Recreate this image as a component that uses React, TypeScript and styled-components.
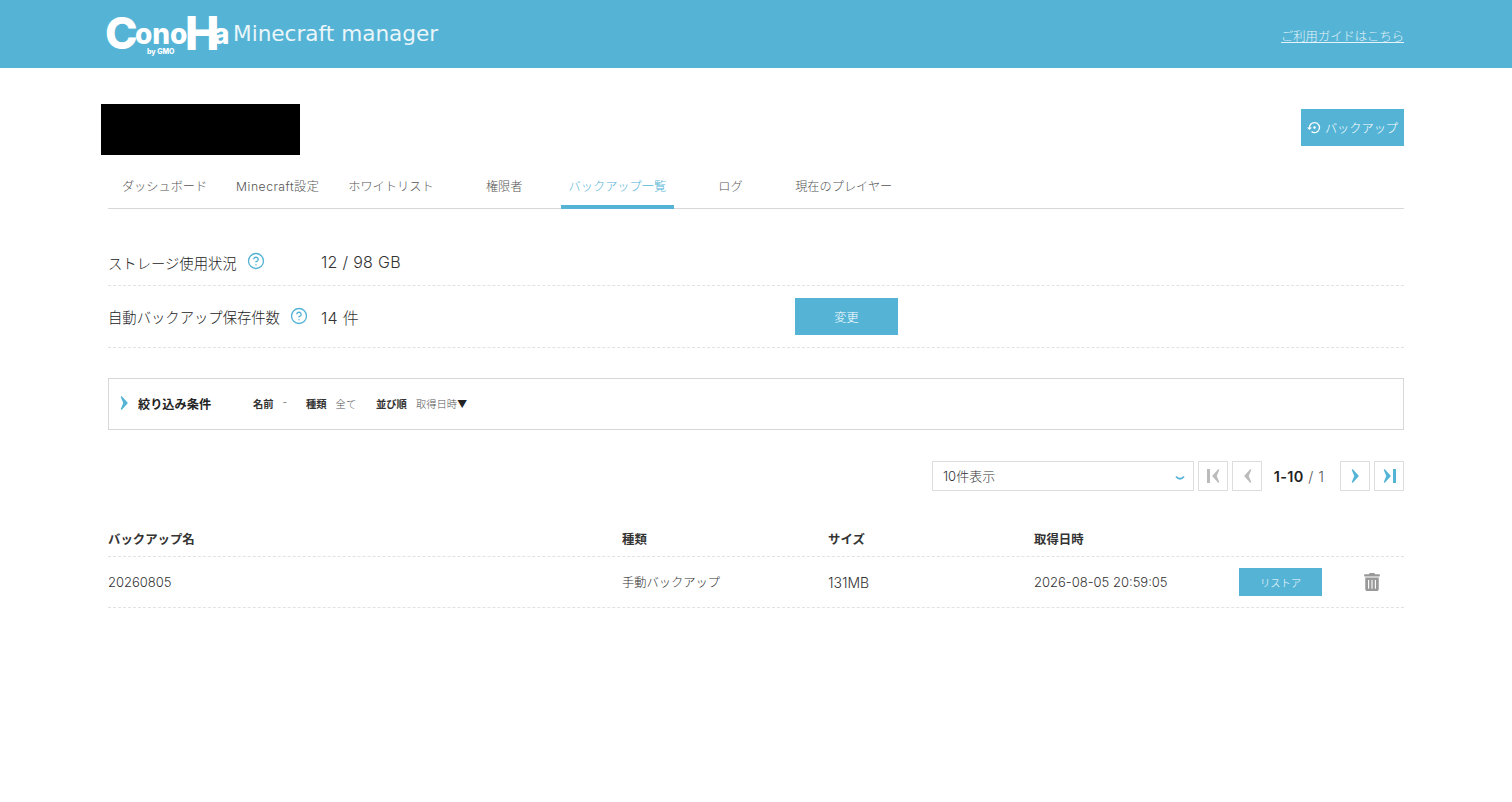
import React from "react"
import styled, { createGlobalStyle } from "styled-components"
import { CircleHelp } from "lucide-react"
import { FaTrashAlt } from "react-icons/fa"
import { MdSettingsBackupRestore } from "react-icons/md"

const BLUE = "#55b4d6"

const GlobalStyle = createGlobalStyle`
  html, body {
    margin: 0;
    padding: 0;
    background: #fff;
  }
  body {
    font-family: Inter, "Noto Sans CJK JP", sans-serif;
    color: #333;
  }
  * {
    box-sizing: border-box;
  }
`

const tabs = ["ダッシュボード", "Minecraft設定", "ホワイトリスト", "権限者", "バックアップ一覧", "ログ", "現在のプレイヤー"]

const Logo = () => (
  <LogoSvg viewBox="-3 0 126 60" width="126" height="60">
    <g fill="#fff" fontFamily="Inter, sans-serif" fontWeight="800">
      <text y="45" fontSize="46">
        <tspan x="-3" fontSize="44">C</tspan>
        <tspan x="27" y="40" fontSize="28">ono</tspan>
        <tspan x="77" y="46">H</tspan>
        <tspan x="105" y="40" fontSize="28">a</tspan>
      </text>
      <text x="39" y="50" fontSize="7">by GMO</text>
    </g>
  </LogoSvg>
)

const Chevron = ({ color, flip }: { color: string; flip?: boolean }) => (
  <svg width="9" height="14" viewBox="0 0 9 14" style={{ transform: flip ? "scaleX(-1)" : undefined }}>
    <path d="M1.5 1 L7 7 L1.5 13 L4 7 Z" fill={color} stroke={color} strokeWidth="1.4" strokeLinejoin="round" />
  </svg>
)

const App: React.FC = () => (
  <>
    <GlobalStyle />
    <Header>
      <HeaderInner>
        <Brand>
          <Logo />
          <BrandName>Minecraft manager</BrandName>
        </Brand>
        <GuideLink href="#">ご利用ガイドはこちら</GuideLink>
      </HeaderInner>
    </Header>
    <Main>
      <TitleRow>
        <Redacted />
        <BackupButton>
          <MdSettingsBackupRestore size={15} />
          バックアップ
        </BackupButton>
      </TitleRow>
      <TabBar>
        {tabs.map((tab) => (
          <Tab key={tab} $active={tab === "バックアップ一覧"} $wide={tab.startsWith("Minecraft")}>
            {tab}
          </Tab>
        ))}
      </TabBar>
      <InfoList>
        <InfoRow $height={47}>
          <InfoLabel>
            ストレージ使用状況
            <HelpIcon size={18} strokeWidth={1.8} />
          </InfoLabel>
          <InfoValue>12 / 98 GB</InfoValue>
        </InfoRow>
        <InfoRow $height={62}>
          <InfoLabel>
            自動バックアップ保存件数
            <HelpIcon size={18} strokeWidth={1.8} />
          </InfoLabel>
          <InfoValue>14 件</InfoValue>
          <ChangeButton>変更</ChangeButton>
        </InfoRow>
      </InfoList>
      <FilterBox>
        <FilterArrow>
          <Chevron color={BLUE} />
        </FilterArrow>
        <FilterTitle>絞り込み条件</FilterTitle>
        <FilterItem $width={53}>
          <b>名前</b>
          <span>-</span>
        </FilterItem>
        <FilterItem $width={70}>
          <b>種類</b>
          <span>全て</span>
        </FilterItem>
        <FilterItem>
          <b>並び順</b>
          <span>
            取得日時<SortMark>▼</SortMark>
          </span>
        </FilterItem>
      </FilterBox>
      <Pager>
        <PageSelect>
          10件表示
          <SelectCaret width="10" height="6" viewBox="0 0 10 6">
            <path d="M1 1.5 Q5 6 9 1.5" fill="none" stroke={BLUE} strokeWidth="1.8" />
          </SelectCaret>
        </PageSelect>
        <PageButton>
          <PageBar $color="#bbb" />
          <Chevron color="#bbb" flip />
        </PageButton>
        <PageButton>
          <Chevron color="#bbb" flip />
        </PageButton>
        <PageCount>
          <strong>1-10</strong> / 1
        </PageCount>
        <PageButton>
          <Chevron color={BLUE} />
        </PageButton>
        <PageButton>
          <Chevron color={BLUE} />
          <PageBar $color={BLUE} />
        </PageButton>
      </Pager>
      <TableHead>
        <span>バックアップ名</span>
        <span>種類</span>
        <span>サイズ</span>
        <span>取得日時</span>
      </TableHead>
      <TableRow>
        <Cell $size={13}>20260805</Cell>
        <Cell $size={12.25}>手動バックアップ</Cell>
        <Cell $size={14}>131MB</Cell>
        <Cell $size={13}>2026-08-05 20:59:05</Cell>
        <RestoreButton>リストア</RestoreButton>
        <TrashCell>
          <FaTrashAlt size={18} />
        </TrashCell>
      </TableRow>
    </Main>
  </>
)

const Header = styled.header`
  height: 68px;
  background: ${BLUE};
`

const HeaderInner = styled.div`
  width: 1296px;
  height: 100%;
  margin: 0 auto;
  display: flex;
  justify-content: space-between;
  align-items: center;
`

const Brand = styled.div`
  display: flex;
  align-items: center;
  gap: 2px;
`

const LogoSvg = styled.svg`
  display: block;
  margin-left: -3px;
`

const BrandName = styled.span`
  margin-top: -2px;
  font-family: "DejaVu Sans", sans-serif;
  font-size: 21.6px;
  color: #fff;
  opacity: 0.88;
`

const GuideLink = styled.a`
  margin-top: 4px;
  font-size: 12.3px;
  color: #fff;
  opacity: 0.85;
  text-decoration: underline;
  font-weight: 300;
`

const Main = styled.main`
  width: 1296px;
  margin: 0 auto;
`

const TitleRow = styled.div`
  display: flex;
  justify-content: space-between;
  align-items: flex-start;
  padding-top: 36px;
  height: 99px;
`

const Redacted = styled.div`
  width: 199px;
  height: 51px;
  margin-left: -7px;
  background: #000;
`

const BackupButton = styled.button`
  width: 103px;
  height: 37px;
  margin-top: 5px;
  padding: 0;
  display: flex;
  align-items: center;
  justify-content: center;
  gap: 3px;
  border: 0;
  background: ${BLUE};
  color: #fff;
  font-family: inherit;
  font-size: 12.2px;
  font-weight: 300;
`

const TabBar = styled.nav`
  display: flex;
  height: 42px;
  border-bottom: 1px solid #d8d8d8;
`

const Tab = styled.div<{ $active?: boolean; $wide?: boolean }>`
  width: 113.2px;
  height: 42px;
  display: flex;
  justify-content: center;
  padding-top: 10px;
  font-size: 12.2px;
  font-weight: 300;
  letter-spacing: ${(p) => (p.$wide ? "0.5px" : "0")};
  color: ${(p) => (p.$active ? BLUE : "#555")};
  border-bottom: 4px solid ${(p) => (p.$active ? BLUE : "transparent")};
`

const InfoList = styled.div`
  margin-top: 30px;
`

const InfoRow = styled.div<{ $height: number }>`
  display: flex;
  align-items: center;
  height: ${(p) => p.$height}px;
  border-bottom: 1px dashed #e2e2e2;
`

const InfoLabel = styled.div`
  width: 213px;
  display: flex;
  align-items: center;
  gap: 10px;
  font-size: 14.33px;
  font-weight: 300;
  color: #222;
`

const HelpIcon = styled(CircleHelp)`
  color: ${BLUE};
  margin-top: -2px;
`

const InfoValue = styled.div`
  width: 474px;
  font-size: 16px;
  letter-spacing: 0.3px;
  font-weight: 300;
  color: #333;
`

const ChangeButton = styled.button`
  width: 103px;
  height: 37px;
  border: 0;
  background: ${BLUE};
  color: #fff;
  font-family: inherit;
  font-size: 12.2px;
  font-weight: 300;
`

const FilterBox = styled.section`
  height: 52px;
  margin-top: 30px;
  padding-left: 11px;
  display: flex;
  align-items: center;
  border: 1px solid #d8d8d8;
  font-size: 10.3px;
`

const FilterArrow = styled.div`
  display: flex;
  margin-top: -3px;
`

const FilterTitle = styled.div`
  width: 115px;
  margin-left: 9px;
  font-size: 12.2px;
  font-weight: 700;
  color: #222;
`

const FilterItem = styled.div<{ $width?: number }>`
  width: ${(p) => (p.$width ? `${p.$width}px` : "auto")};
  margin-top: -1px;
  display: flex;
  gap: 9px;
  color: #555;
  font-weight: 300;
  b {
    font-weight: 700;
    color: #333;
  }
`

const SortMark = styled.span`
  color: #222;
`

const Pager = styled.div`
  display: flex;
  justify-content: flex-end;
  align-items: center;
  margin-top: 31px;
  height: 30px;
`

const PageSelect = styled.div`
  width: 262px;
  height: 30px;
  margin-right: 4px;
  padding: 0 8px 2px 10px;
  display: flex;
  align-items: center;
  justify-content: space-between;
  border: 1px solid #ddd;
  font-size: 13px;
  font-weight: 300;
  color: #333;
`

const SelectCaret = styled.svg`
  margin-top: 5px;
`

const PageButton = styled.div`
  width: 30px;
  height: 30px;
  margin-left: 4px;
  display: flex;
  align-items: center;
  justify-content: center;
  gap: 1px;
  border: 1px solid #ddd;
  &:nth-of-type(2) {
    margin-left: 0;
  }
`

const PageBar = styled.i<{ $color: string }>`
  width: 3px;
  height: 14px;
  background: ${(p) => p.$color};
`

const PageCount = styled.div`
  width: 74px;
  text-align: center;
  font-size: 14.5px;
  letter-spacing: 0.4px;
  font-weight: 300;
  color: #555;
  strong {
    font-weight: 600;
    color: #222;
  }
`

const TableHead = styled.div`
  display: grid;
  grid-template-columns: 514px 206px 206px 205px;
  align-items: center;
  height: 36px;
  margin-top: 30px;
  border-bottom: 1px dashed #e2e2e2;
  font-size: 12.4px;
  font-weight: 700;
  color: #333;
`

const TableRow = styled.div`
  display: grid;
  grid-template-columns: 514px 206px 206px 205px 83px 82px;
  align-items: center;
  height: 51px;
  border-bottom: 1px dashed #e2e2e2;
`

const Cell = styled.span<{ $size: number }>`
  font-size: ${(p) => p.$size}px;
  font-weight: 300;
  color: #333;
`

const RestoreButton = styled.button`
  height: 28px;
  padding: 0;
  border: 0;
  background: ${BLUE};
  color: #fff;
  font-family: inherit;
  font-size: 10.3px;
  font-weight: 300;
`

const TrashCell = styled.div`
  display: flex;
  justify-content: center;
  color: #999;
  padding-left: 18px;
`

export default App
